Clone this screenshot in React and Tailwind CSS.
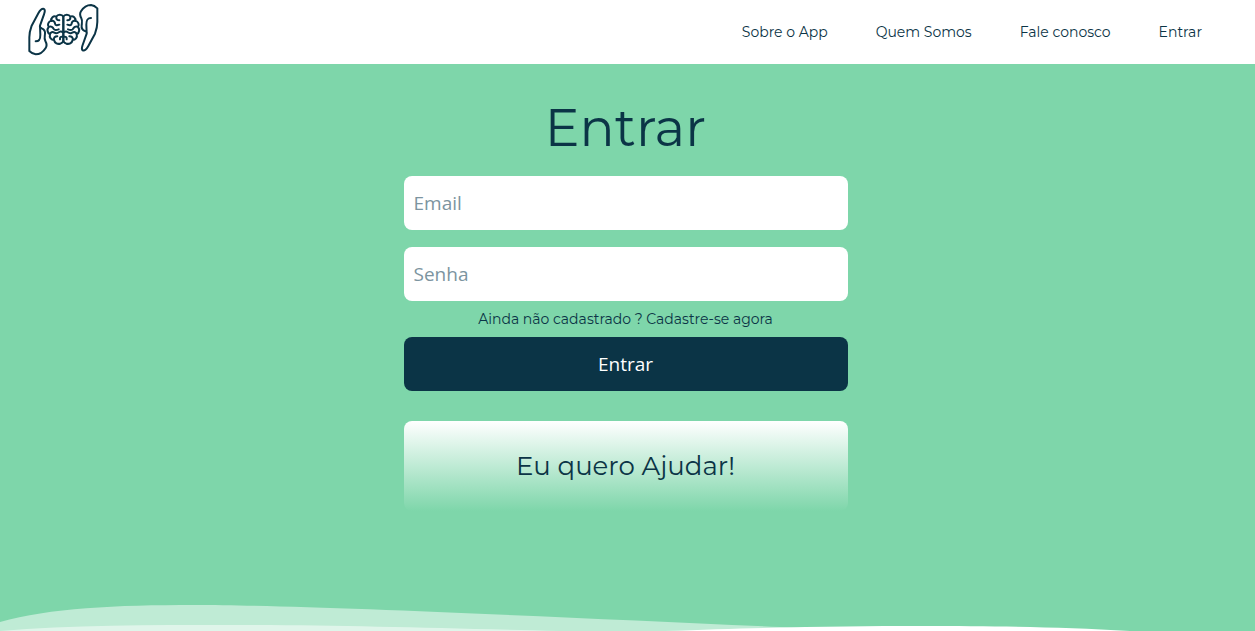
import React from 'react';

const links = [
  { label: 'Sobre o App', href: '#sobre' },
  { label: 'Quem Somos', href: '#quem-somos' },
  { label: 'Fale conosco', href: '#contato' },
  { label: 'Entrar', href: '#entrar' },
];

const HAND =
  'M28 153V112C28 98 31 88 35 77C41 66 48 53 55 40C60 31 66 25 72 27C77 30 74 37 72 43L60 77C59 81 61 84 65 85C73 88 76 94 75 102C74 110 72 116 76 123C80 130 82 136 77 144C69 157 58 163 47 163C38 162 33 158 28 153ZM60 78L61 104C61 117 59 124 47 124';

const HALF_BRAIN =
  'M130 50C126 42 113 42 109 50C100 46 92 55 94 62C85 65 81 74 86 81C80 88 82 99 90 103C87 112 94 120 102 120C104 130 113 133 121 131C127 129 130 125 130 121V50' +
  'M109 50C108 58 112 61 118 61M94 63C101 61 105 66 105 71C106 77 112 76 118 74M86 81C93 77 99 82 101 87C104 91 110 90 116 88' +
  'M90 103C91 96 98 95 103 98C108 101 114 99 118 96C122 93 126 95 130 98M102 120C100 113 105 109 112 109M130 111C123 108 119 112 120 118';

function Logo() {
  return (
    <svg viewBox="0 0 270 192" className="h-16 w-[90px]" fill="none" stroke="#0b3446" strokeWidth="6" strokeLinecap="round" strokeLinejoin="round" aria-hidden="true">
      <path d={HAND} />
      <path d={HAND} transform="rotate(180 130 89)" />
      <path d={HALF_BRAIN} />
      <path d={HALF_BRAIN} transform="translate(260 0) scale(-1 1)" />
    </svg>
  );
}

function Waves() {
  return (
    <svg viewBox="0 0 1255 31" preserveAspectRatio="none" className="absolute inset-x-0 bottom-0 h-[31px] w-full" aria-hidden="true">
      <path fill="#ffffff" fillOpacity=".5" d="M0 32C50 18 115 15 195 15C300 15 560 27 780 37L860 41H0Z" transform="translate(0 -10)" />
      <path fill="#ffffff" fillOpacity=".5" d="M0 31C70 25 150 25 230 25C340 25 430 28 560 31Z" />
      <path fill="#ffffff" d="M665 31C770 27 850 26 920 26C1000 26 1060 27 1130 31Z" />
    </svg>
  );
}

export default function App() {
  return (
    <div className="flex min-h-screen flex-col bg-[#7ed6aa] font-[Montserrat,Inter,sans-serif] text-[#0b3446]">
      <header className="flex h-16 items-center justify-between bg-white pr-[53px] pl-5">
        <a href="#inicio" aria-label="Início">
          <Logo />
        </a>
        <nav className="flex gap-12 text-sm">
          {links.map((link) => (
            <a key={link.label} href={link.href}>
              {link.label}
            </a>
          ))}
        </nav>
      </header>
      <main className="relative flex flex-1 flex-col items-center pt-7 pr-5 pb-[120px] pl-4">
        <form className="flex w-full max-w-[444px] flex-col" onSubmit={(e) => e.preventDefault()}>
          <h1 className="mb-3 text-center text-[52px] leading-[72px]">Entrar</h1>
          <input
            type="email"
            aria-label="Email"
            placeholder="Email"
            className="mb-[17px] h-[54px] rounded-lg bg-white px-[10px] font-['Open_Sans',sans-serif] text-[19px] placeholder:text-[#7c94a0]"
          />
          <input
            type="password"
            aria-label="Senha"
            placeholder="Senha"
            className="h-[54px] rounded-lg bg-white px-[10px] font-['Open_Sans',sans-serif] text-[19px] placeholder:text-[#7c94a0]"
          />
          <a href="#cadastro" className="text-center text-sm leading-9">
            Ainda não cadastrado ? Cadastre-se agora
          </a>
          <button type="submit" className="h-[54px] rounded-lg bg-[#0b3446] font-['Open_Sans',sans-serif] text-[19px] text-white">
            Entrar
          </button>
          <button type="button" className="mt-[30px] h-[90px] rounded-lg bg-linear-to-b/srgb from-white to-[#7ed6aa] text-[26px]">
            Eu quero Ajudar!
          </button>
        </form>
        <Waves />
      </main>
    </div>
  );
}
